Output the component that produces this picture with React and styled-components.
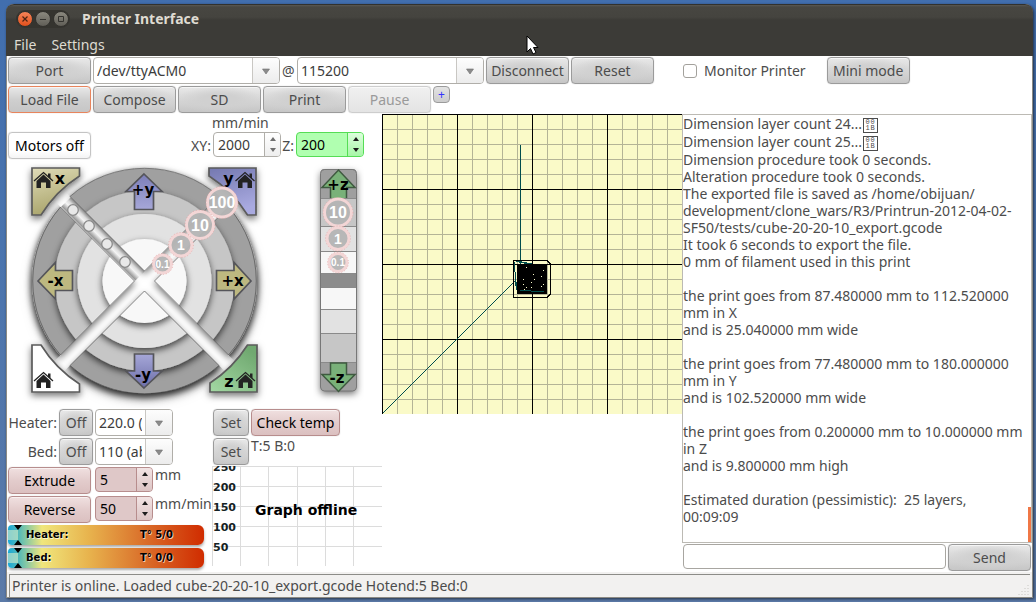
import React from 'react';

import styled, { createGlobalStyle } from 'styled-components';

const GlobalStyle = createGlobalStyle`
    * {
        box-sizing: border-box;
    }
    body {
        margin: 0;
        font-family: "Noto Sans", "Open Sans", sans-serif;
        font-size: 14px;
        color: #4c4c4c;
    }
    button, input, select {
        font: inherit;
        color: inherit;
        margin: 0;
    }
`

const Desktop = styled.div`
    display: flex;
    flex-direction: column;
    min-height: 100vh;
    padding: 4px 3px 4px 6px;
    background: linear-gradient(#416eae, #4a74ae 40%, #5b7aa8);
`

const AppWindow = styled.div`
    display: flex;
    flex-direction: column;
    flex: 1;
    border: 1px solid #8d8b84;
    border-top: none;
    border-radius: 8px 8px 0 0;
    background: #ffffff;
    box-shadow: 1px 1px 3px rgba(0, 0, 0, 0.6);
`

const Header = styled.header`
    position: relative;
    height: 52px;
    margin: 0 -1px;
    padding-left: 1px;
    border-top: 1px solid #32312d;
    border-radius: 8px 8px 0 0;
    background: linear-gradient(#5a5852 0px, #474641 2px, #45443f 12px, #3c3b37 15px, #3c3b37);
    color: #dfdbd2;
`

const TitleBar = styled.div`
    display: flex;
    align-items: center;
    height: 28px;
    padding-left: 9px;
    gap: 12px;
`

const Title = styled.h1`
    margin: 0;
    font-size: 14px;
    line-height: 20px;
`

const WindowButtons = styled.div`
    display: flex;
    gap: 2px;
    padding: 1px;
    border-radius: 9px;
    background: #35342f;
`

const WindowButton = styled.button`
    display: flex;
    width: 16px;
    height: 16px;
    padding: 0;
    border: 1px solid #33322e;
    border-radius: 8px;
    background: ${props => props.$close ? 'linear-gradient(#f58458, #e2501c)' : 'linear-gradient(#8b897f, #605e57)'};
`

const Menu = styled.nav`
    display: flex;
    gap: 15px;
    padding-left: 7px;
    line-height: 24px;
`

const MenuLink = styled.a`
    color: #dfdbd2;
    text-decoration: none;
`

const Cursor = styled.svg`
    position: absolute;
    left: 50%;
    top: 30px;
    margin-left: 6px;
`

const Toolbar = styled.div`
    display: flex;
    align-items: flex-start;
    gap: 2px;
    height: 29px;
    padding: 1px;
`

const buttonTones = {
    grey: { back: 'radial-gradient(ellipse at center, #d0d0d0 30%, rgba(208, 208, 208, 0) 75%), linear-gradient(#e8e8e8, #c6c6c6)', line: '#9b9b9b', text: '#4c4c4c' },
    focus: { back: 'linear-gradient(#e8e8e8, #cfcfcf 50%, #c6c6c6)', line: '#e8845c', text: '#4c4c4c' },
    disabled: { back: 'linear-gradient(#f0f0f0, #e4e4e4)', line: '#cdcdcd', text: '#9a9a9a' },
    white: { back: 'linear-gradient(#ffffff, #ffffff 70%, #f4f4f4)', line: '#c4c4c4', text: '#000000' },
    pink: { back: 'linear-gradient(#f0e0e0, #e3cccc 50%, #dbc0c0)', line: '#b78d8d', text: '#000000' }
}

const Button = styled.button`
    flex: none;
    width: ${props => props.$width || 83}px;
    height: 27px;
    padding: 0;
    border: 1px solid ${props => buttonTones[props.$tone || 'grey'].line};
    border-radius: 4px;
    background: ${props => buttonTones[props.$tone || 'grey'].back};
    color: ${props => buttonTones[props.$tone || 'grey'].text};
    box-shadow: inset 0 1px 0 rgba(255, 255, 255, 0.6), 0 0 1px rgba(0, 0, 0, 0.3);
    text-align: center;
    white-space: nowrap;
`

const PlusButton = styled.button`
    width: 17px;
    height: 17px;
    padding: 0;
    border: 1px solid #9b9b9b;
    border-radius: 4px;
    background: linear-gradient(#e4e4e4, #cccccc);
    color: #3333ff;
    font-size: 12px;
    line-height: 14px;
`

const At = styled.span`
    width: 13px;
    line-height: 27px;
`

const ComboBox = styled.span`
    display: flex;
    flex: none;
    position: relative;
    width: ${props => props.$width}px;
    height: 27px;
    border: 1px solid #b0aea9;
    border-radius: 4px;
    background: #ffffff;
    overflow: hidden;
`

const ComboSelect = styled.select`
    flex: 1;
    min-width: 0;
    height: 25px;
    padding: 0 30px 0 3px;
    border: none;
    appearance: none;
    background: linear-gradient(#fdfdfd, #ececec) right / 26px 100% no-repeat;
    color: #3c3c3c;
`

const ComboArrow = styled.svg`
    position: absolute;
    right: 0;
    top: 0;
    border-left: 1px solid #c9c7c3;
    pointer-events: none;
`

const MonitorLabel = styled.label`
    display: flex;
    align-items: center;
    gap: 7px;
    height: 27px;
    margin: 0 19px 0 27px;
`

const CheckBox = styled.input`
    appearance: none;
    width: 14px;
    height: 14px;
    border: 1px solid #a3a19c;
    border-radius: 3px;
    background: #ffffff;
`

const Main = styled.main`
    display: grid;
    grid-template-columns: 375px 300px minmax(0, 1fr);
    flex: 1;
`

const Controls = styled.section`
    display: flex;
    flex-direction: column;
`

const FeedUnit = styled.div`
    height: 17px;
    padding-left: 205px;
    line-height: 17px;
`

const SpeedRow = styled.div`
    display: flex;
    height: 29px;
    padding: 1px;
`

const SpeedLabel = styled.label`
    width: ${props => props.$width}px;
    padding-right: 2px;
    line-height: 27px;
    text-align: right;
    white-space: nowrap;
`

const spinTones = {
    white: { field: '#ffffff', knob: 'linear-gradient(#ffffff, #eeeeee)', line: '#b0aea9', text: '#3c3c3c' },
    green: { field: '#b0ffb0', knob: 'linear-gradient(#dcffdc, #a8f6a8)', line: '#55dd55', text: '#000000' },
    pink: { field: '#dfc8c8', knob: 'linear-gradient(#f2e4e4, #dcc4c4)', line: '#b78d8d', text: '#000000' }
}

const SpinBox = styled.span`
    display: flex;
    flex: none;
    width: ${props => props.$width}px;
    height: 25px;
    border: 1px solid ${props => spinTones[props.$tone].line};
    border-radius: 4px;
    background: ${props => spinTones[props.$tone].field};
    overflow: hidden;
`

const SpinInput = styled.input`
    flex: 1;
    min-width: 0;
    padding: 0 0 0 4px;
    border: none;
    background: none;
    color: ${props => spinTones[props.$tone].text};
`

const SpinKnobs = styled.span`
    display: flex;
    flex-direction: column;
    width: 16px;
    border-left: 1px solid ${props => spinTones[props.$tone].line};
    background: ${props => spinTones[props.$tone].knob};
`

const SpinKnob = styled.button`
    display: flex;
    flex: 1;
    align-items: center;
    justify-content: center;
    padding: 0;
    border: none;
    background: none;
`

const JogPad = styled.svg`
    display: block;
    width: 375px;
    height: 248px;
    text {
        font-family: "DejaVu Sans", sans-serif;
        font-weight: bold;
        text-anchor: middle;
    }
    text.step {
        font-family: "Liberation Sans", sans-serif;
        fill: #ffffff;
    }
`

const HeatArea = styled.div`
    display: grid;
    grid-template-columns: 205px 170px;
`

const HeatRow = styled.div`
    display: flex;
    gap: 2px;
    height: 29px;
    padding: 1px;
`

const HeatLabel = styled.label`
    display: flex;
    justify-content: flex-end;
    width: 49px;
    line-height: 27px;
    white-space: nowrap;
`

const FeedRow = styled(HeatRow)`
    gap: 4px;
`

const Unit = styled.span`
    line-height: 15px;
    margin-left: -2px;
    white-space: nowrap;
`

const Readout = styled.span`
    line-height: 15px;
`

const Gauge = styled.div`
    display: flex;
    align-items: center;
    width: 196px;
    height: 20px;
    margin: 1px 0 3px 1px;
    border-radius: 4px 6px 6px 4px;
    background: linear-gradient(90deg, #18a8d8, #5cbcb4 12px, #f0e67c 34px, #e8b44e 80px, #d96a28 140px, #d02c00);
    box-shadow: 0 2px 3px rgba(0, 0, 0, 0.35);
    color: #000000;
    font-family: "DejaVu Sans", sans-serif;
    font-size: 10px;
    font-weight: bold;
    line-height: 18px;
    text-shadow: 1px 1px 0 rgba(255, 255, 255, 0.7);
`

const GaugeName = styled.span`
    width: 117px;
    padding-left: 3px;
`

const Graph = styled.svg`
    display: block;
    width: 170px;
    height: 100px;
    text {
        font-family: "DejaVu Sans", sans-serif;
        font-weight: bold;
        font-size: 11px;
        fill: #152224;
    }
    text.notice {
        font-size: 14px;
        fill: #000000;
    }
`

const Plate = styled.svg`
    display: block;
    width: 300px;
    height: 300px;
`

const Console = styled.section`
    display: flex;
    flex-direction: column;
`

const Log = styled.div`
    position: relative;
    flex: 1;
    border: 1px solid #bcbab4;
    line-height: 17px;
    white-space: pre;
    overflow: hidden;
`

const LogLine = styled.div`
    min-height: 17px;
    height: ${props => props.$tall ? 18 : 17}px;
`

const EscapeBox = styled.span`
    display: inline-grid;
    grid-template-columns: 5px 5px;
    grid-auto-rows: 6px;
    align-items: center;
    justify-content: center;
    align-content: center;
    width: 15px;
    height: 15px;
    margin-left: 1px;
    border: 1px solid #4c4c4c;
    font-family: "Liberation Mono", monospace;
    font-size: 7px;
    line-height: 6px;
    vertical-align: middle;
`

const ScrollThumb = styled.div`
    position: absolute;
    right: 0;
    bottom: 0;
    width: 3px;
    height: 35px;
    background: #f07746;
`

const SendRow = styled.form`
    display: flex;
    gap: 2px;
    height: 29px;
    padding: 1px;
`

const CommandInput = styled.input`
    flex: 1;
    min-width: 0;
    height: 25px;
    padding: 0 4px;
    border: 1px solid #a8a6a1;
    border-radius: 4px;
`

const StatusBar = styled.footer`
    display: flex;
    height: 25px;
    padding: 2px 0 0 2px;
    background: #f2f1f0;
`

const StatusText = styled.div`
    flex: 1;
    position: relative;
    border-top: 1px solid #8c8c88;
    border-left: 1px solid #8c8c88;
    margin-right: 2px;
    padding-left: 2px;
    line-height: 22px;
`

const Grip = styled.svg`
    position: absolute;
    right: 0;
    bottom: 0;
`

const logLines = [
    'Dimension procedure took 0 seconds.',
    'Alteration procedure took 0 seconds.',
    'The exported file is saved as /home/obijuan/',
    'development/clone_wars/R3/Printrun-2012-04-02-',
    'SF50/tests/cube-20-20-10_export.gcode',
    'It took 6 seconds to export the file.',
    '0 mm of filament used in this print',
    '',
    'the print goes from 87.480000 mm to 112.520000',
    'mm in X',
    'and is 25.040000 mm wide',
    '',
    'the print goes from 77.480000 mm to 180.000000',
    'mm in Y',
    'and is 102.520000 mm wide',
    '',
    'the print goes from 0.200000 mm to 10.000000 mm',
    'in Z',
    'and is 9.800000 mm high',
    '',
    'Estimated duration (pessimistic):  25 layers,',
    '00:09:09'
]

function Combo({ id, width, value, label }) {
    return (
        <ComboBox $width={width}>
            <ComboSelect id={id} aria-label={label} defaultValue={value}>
                <option value={value}>{value}</option>
            </ComboSelect>
            <ComboArrow width="27" height="25">
                <path d="M9.500 11h7l-3.500 5z" fill="#8b8b8b" stroke="#6f6f6f" strokeWidth="0.600" />
            </ComboArrow>
        </ComboBox>
    )
}

function Spin({ id, width, value, tone, label }) {
    const arrow = tone === 'white' ? '#6e6e6e' : '#1c1c1c';
    return (
        <SpinBox $width={width} $tone={tone}>
            <SpinInput id={id} type="text" aria-label={label} defaultValue={value} $tone={tone} />
            <SpinKnobs $tone={tone}>
                <SpinKnob aria-label="Increase" type="button">
                    <svg width="6" height="4"><path d="M0 4l3-4 3 4z" fill={arrow} /></svg>
                </SpinKnob>
                <SpinKnob aria-label="Decrease" type="button">
                    <svg width="6" height="4"><path d="M0 0l3 4 3-4z" fill={arrow} /></svg>
                </SpinKnob>
            </SpinKnobs>
        </SpinBox>
    )
}

function House({ x, y }) {
    return (
        <g transform={`translate(${x} ${y})`}>
            <path d="M-9.500 0.500L0 -8L9.500 0.500" fill="none" stroke="#222" strokeWidth="1.300" />
            <path d="M4.500 -7h2.500v5l-2.500 -2z" fill="#222" />
            <path d="M0 -6L7 0.500V7.500H2.500V2H-2.500V7.500H-7V0.500z" fill="#222" />
        </g>
    )
}

function Step({ x, y, r, size, children }) {
    return (
        <g>
            <circle cx={x} cy={y} r={r - 1.5} fill="#b4b4b4" fillOpacity="0.95" stroke="#f3d6d6" strokeWidth="3" />
            <circle cx={x} cy={y} r={r} fill="none" stroke="#e09c9c" strokeWidth="0.600" strokeDasharray="1 2" />
            <text className="step" x={x} y={y + size * 0.36} fontSize={size}>{children}</text>
        </g>
    )
}

// rings are drawn biggest first so every smaller one throws its shadow outwards
const rings = [[112.5, '#a0a0a0'], [90, '#c6c6c6'], [67, '#e2e2e2'], [42, '#f8f8f8']];
const quadrants = [
    'M144.500 271L31 157.500H258z',
    'M134.500 281L21 167.500V394.500z',
    'M154.500 281L268 167.500V394.500z',
    'M144.500 291L31 404.500H258z'
];
const quadrantEdges = [
    'M144.500 271L70 196.500A112.500 112.500 0 0 1 219 196.500z',
    'M134.500 281L60.500 207A112.500 112.500 0 0 0 60.500 355z',
    'M154.500 281L228.500 207A112.500 112.500 0 0 1 228.500 355z',
    'M144.500 291L70 365.500A112.500 112.500 0 0 0 219 365.500z'
];
const beads = [[73, 210], [89, 226], [107, 244], [125, 262]];
const zSegments = [
    [169, 29, '#9f9f9f'], [198, 28, '#c6c6c6'], [226, 25, '#e2e2e2'], [251, 22, '#f7f7f7'], [273, 14, '#8c8c8c'],
    [287, 22, '#f7f7f7'], [309, 24, '#e2e2e2'], [333, 29, '#c6c6c6'], [362, 29, '#9f9f9f']
];

function Jog() {
    return (
        <JogPad viewBox="7 160 375 248">
            <defs>
                <clipPath id="quads">{quadrants.map(d => <path key={d} d={d} />)}</clipPath>
                <clipPath id="zbar"><rect x="320.500" y="169" width="36" height="222" rx="4" /></clipPath>
                <filter id="drop" x="-20%" y="-20%" width="140%" height="150%">
                    <feDropShadow dx="0" dy="3" stdDeviation="3.500" floodOpacity="0.7" />
                </filter>
                <filter id="soft" x="-20%" y="-20%" width="140%" height="150%">
                    <feDropShadow dx="0" dy="3" stdDeviation="3.500" floodOpacity="0.55" />
                </filter>
                <linearGradient id="tube" gradientUnits="userSpaceOnUse" x1="98" y1="243" x2="107" y2="234">
                    <stop offset="0" stopColor="#8e8e8e" />
                    <stop offset="0.450" stopColor="#f4f4f4" />
                    <stop offset="0.700" stopColor="#dcdcdc" />
                    <stop offset="1" stopColor="#8a8a8a" />
                </linearGradient>
                <linearGradient id="khaki" x1="0" y1="0" x2="0.3" y2="1">
                    <stop offset="0" stopColor="#e0dcb8" /><stop offset="1" stopColor="#aaa56c" />
                </linearGradient>
                <linearGradient id="violet" x1="0" y1="0" x2="0.3" y2="1">
                    <stop offset="0" stopColor="#7478b0" /><stop offset="1" stopColor="#a9aae0" />
                </linearGradient>
                <linearGradient id="green" x1="0" y1="1" x2="0.7" y2="0">
                    <stop offset="0" stopColor="#a4d8a4" /><stop offset="1" stopColor="#6fa86f" />
                </linearGradient>
                <linearGradient id="arrowUp" x1="0" y1="0" x2="0" y2="1">
                    <stop offset="0" stopColor="#7c7eb8" /><stop offset="1" stopColor="#a6a7d8" />
                </linearGradient>
                <linearGradient id="arrowDown" x1="0" y1="0" x2="0" y2="1">
                    <stop offset="0" stopColor="#a6a7d8" /><stop offset="1" stopColor="#6c6ea8" />
                </linearGradient>
            </defs>
            <g filter="url(#soft)">
                <g clipPath="url(#quads)">
                    {rings.map(([r, fill]) => <circle key={r} cx="144.500" cy="281" r={r} fill={fill} filter="url(#drop)" />)}
                </g>
            </g>
            <path d="M66 202L140 276" stroke="url(#tube)" strokeWidth="13" />
            {quadrantEdges.map(d => <path key={d} d={d} fill="none" stroke="#4a4a4a" strokeWidth="0.800" strokeOpacity="0.8" />)}
            {beads.map(([x, y]) => <circle key={x} cx={x} cy={y} r="5.300" fill="#e8e8e8" stroke="#8a8a8a" strokeWidth="1.300" />)}
            <g stroke="#5b5b5b" strokeWidth="1.700" filter="url(#soft)">
                <path d="M32 168H79.500V176A123.500 123.500 0 0 0 41 215H32z" fill="url(#khaki)" />
                <path d="M256 168H209V176A123.500 123.500 0 0 1 247.500 215H256z" fill="url(#violet)" />
                <path d="M32 345H41A123.500 123.500 0 0 0 79.500 384V392H32z" fill="#ffffff" />
                <path d="M257 345H247.500A123.500 123.500 0 0 1 210 383V392H257z" fill="url(#green)" />
            </g>
            <House x={43.5} y={180.5} />
            <House x={245} y={180.5} />
            <House x={43.5} y={380.5} />
            <House x={245.5} y={380.5} />
            <text x="60" y="183.500" fontSize="16">x</text>
            <text x="228.500" y="184" fontSize="16">y</text>
            <text x="229" y="387" fontSize="16">z</text>
            <g stroke="#55555a" strokeWidth="1.700">
                <path d="M144 174L162 191.500H153.500V209.500H134.500V191.500H126z" fill="url(#arrowUp)" />
                <path d="M144 388L162 371H153.500V354H134.500V371H126z" fill="url(#arrowDown)" />
                <path d="M38 281L55.500 262.500V270.500H72.500V290.500H55.500V299z" fill="#bdb880" />
                <path d="M251 281L234 262.500V270.500H216.500V290.500H234V299z" fill="#bdb880" />
            </g>
            <text x="143" y="194.500" fontSize="15">+y</text>
            <text x="143" y="380" fontSize="15">-y</text>
            <text x="55.500" y="286" fontSize="15">-x</text>
            <text x="232.500" y="286" fontSize="15">+x</text>
            <Step x={222} y={202.5} r={16} size={16}>100</Step>
            <Step x={200} y={225} r={15} size={16}>10</Step>
            <Step x={181} y={245} r={12.5} size={14}>1</Step>
            <Step x={162.5} y={264} r={10.5} size={10}>0.1</Step>
            <g filter="url(#soft)">
                <g clipPath="url(#zbar)">
                    {zSegments.map(([y, h, fill]) => (
                        <rect key={y} x="320.500" y={y + 0.5} width="36" height={h} fill={fill} stroke="#8a8a8a" />
                    ))}
                </g>
            </g>
            <rect x="320.500" y="169.500" width="36" height="221.500" rx="4" fill="none" stroke="#777" />
            <g stroke="#3f5a40" strokeWidth="1.500">
                <path d="M330.500 198V187.500H322L338.500 170L355 187.500H346.500V198" fill="#79b179" />
                <path d="M330.500 363V374.500H322L338.500 391.500L355 374.500H346.500V363z" fill="#79b179" />
            </g>
            <text x="338" y="189.500" fontSize="15">+z</text>
            <text x="337" y="383" fontSize="15">-z</text>
            <Step x={338} y={212.5} r={15} size={16}>10</Step>
            <Step x={338} y={238.5} r={12.5} size={14}>1</Step>
            <Step x={338} y={262.5} r={10.5} size={10}>0.1</Step>
        </JogPad>
    )
}

function TempGraph() {
    return (
        <Graph viewBox="0 0 170 100">
            <path d="M0.500 0V100M28.500 0V100M56.500 0V100M85.500 0V100M113.500 0V100M141.500 0V100" stroke="#dcdcdc" />
            <path d="M0 0.500H170M0 20.500H170M0 40.500H170M0 60.500H170M0 80.500H170" stroke="#dcdcdc" />
            <g>
                <text x="1" y="5">250</text>
                <text x="1" y="25">200</text>
                <text x="1" y="45">150</text>
                <text x="1" y="65">100</text>
                <text x="1" y="85">50</text>
            </g>
            <text className="notice" x="43" y="49">Graph offline</text>
        </Graph>
    )
}

function BuildPlate() {
    const ticks = Array.from({ length: 20 }, (_, i) => i * 15);
    const dots = [[144, 153], [161, 156], [151, 160], [159, 162], [141, 165], [152, 165], [149, 168], [141, 170], [161, 170], [159, 172], [144, 173], [149, 173], [142, 175]];
    return (
        <Plate viewBox="0 0 300 300" shapeRendering="crispEdges">
            <rect width="300" height="300" fill="#fafac8" />
            {ticks.map(t => <path key={t} d={`M${t + 0.5} 0V300M0 ${t + 0.5}H300`} stroke="#b4b496" />)}
            {ticks.filter(t => t % 75 === 0).map(t => <path key={t} d={`M${t + 0.5} 0V300M0 ${t + 0.5}H300`} stroke="#000000" />)}
            <path d="M138.500 31V153" stroke="#004d4d" />
            <path d="M0.500 299.500L133.500 166.500" stroke="#004d4d" />
            <path d="M131.500 146.500H165L168.500 150V180L165 183.500H131.500z" fill="none" stroke="#000000" />
            <rect x="135" y="150" width="30" height="30" fill="#000000" />
            <path d="M132.500 148V158M133.500 158V172M134.500 168V176M134 147.500H140M137 148.500H145M142 149.500H150M138 176.500H149M149 177.500H162" stroke="#004d4d" />
            {dots.map(([x, y]) => <rect key={`${x}-${y}`} x={x} y={y} width="1" height="1" fill="#fafac8" />)}
        </Plate>
    )
}

function GaugeBar({ name, reading }) {
    return (
        <Gauge>
            <svg width="15" height="20">
                <path d="M0 5h10v10h-10z" fill="#d8ecc8" fillOpacity="0.6" />
                <path d="M6 0h8l-4 5zM6 20h8l-4 -5z" fill="#000000" />
            </svg>
            <GaugeName>{name}</GaugeName>
            <span>{reading}</span>
        </Gauge>
    )
}

function App() {
    return (
        <Desktop>
            <GlobalStyle />
            <AppWindow>
                <Header>
                    <TitleBar>
                        <WindowButtons>
                            <WindowButton $close aria-label="Close">
                                <svg width="14" height="14"><path d="M4.500 4.500l5 5M9.500 4.500l-5 5" stroke="#4b2414" strokeWidth="1.200" /></svg>
                            </WindowButton>
                            <WindowButton aria-label="Minimise">
                                <svg width="14" height="14"><path d="M4 7.500h6" stroke="#33322e" /></svg>
                            </WindowButton>
                            <WindowButton aria-label="Maximise">
                                <svg width="14" height="14"><path d="M4.500 4.500h5v5h-5z" fill="none" stroke="#33322e" /></svg>
                            </WindowButton>
                        </WindowButtons>
                        <Title>Printer Interface</Title>
                    </TitleBar>
                    <Menu>
                        <MenuLink href="#file">File</MenuLink>
                        <MenuLink href="#settings">Settings</MenuLink>
                    </Menu>
                    <Cursor width="14" height="20">
                        <path d="M1 1V17L4.500 13.500L7 19L10 17.500L7.500 12.500H12z" fill="#ffffff" stroke="#000000" />
                    </Cursor>
                </Header>
                <Toolbar>
                    <Button>Port</Button>
                    <Combo width={187} value="/dev/ttyACM0" label="Port" />
                    <At>@</At>
                    <Combo width={187} value="115200" label="Baud rate" />
                    <Button>Disconnect</Button>
                    <Button>Reset</Button>
                    <MonitorLabel>
                        <CheckBox type="checkbox" />
                        Monitor Printer
                    </MonitorLabel>
                    <Button>Mini mode</Button>
                </Toolbar>
                <Toolbar>
                    <Button $tone="focus">Load File</Button>
                    <Button>Compose</Button>
                    <Button>SD</Button>
                    <Button>Print</Button>
                    <Button $tone="disabled" disabled>Pause</Button>
                    <PlusButton>+</PlusButton>
                </Toolbar>
                <Main>
                    <Controls>
                        <FeedUnit>mm/min</FeedUnit>
                        <SpeedRow>
                            <Button $tone="white">Motors off</Button>
                            <SpeedLabel htmlFor="xy" $width={122}>XY:</SpeedLabel>
                            <Spin id="xy" width={68} value="2000" tone="white" />
                            <SpeedLabel htmlFor="z" $width={15}>Z:</SpeedLabel>
                            <Spin id="z" width={68} value="200" tone="green" />
                        </SpeedRow>
                        <Jog />
                        <HeatArea>
                            <div>
                                <HeatRow>
                                    <HeatLabel htmlFor="heater">Heater:</HeatLabel>
                                    <Button $width={34}>Off</Button>
                                    <Combo id="heater" width={78} value="220.0 (pla)" />
                                </HeatRow>
                                <HeatRow>
                                    <HeatLabel htmlFor="bed">Bed:</HeatLabel>
                                    <Button $width={34}>Off</Button>
                                    <Combo id="bed" width={78} value="110 (abs)" />
                                </HeatRow>
                                <FeedRow>
                                    <Button $tone="pink">Extrude</Button>
                                    <Spin width={58} value="5" tone="pink" label="Length" />
                                    <Unit>mm</Unit>
                                </FeedRow>
                                <FeedRow>
                                    <Button $tone="pink">Reverse</Button>
                                    <Spin width={58} value="50" tone="pink" label="Feed rate" />
                                    <Unit>mm/min</Unit>
                                </FeedRow>
                                <GaugeBar name="Heater:" reading="T° 5/0" />
                                <GaugeBar name="Bed:" reading="T° 0/0" />
                            </div>
                            <div>
                                <HeatRow>
                                    <Button $width={36}>Set</Button>
                                    <Button $width={89} $tone="pink">Check temp</Button>
                                </HeatRow>
                                <HeatRow>
                                    <Button $width={36}>Set</Button>
                                    <Readout>T:5 B:0</Readout>
                                </HeatRow>
                                <TempGraph />
                            </div>
                        </HeatArea>
                    </Controls>
                    <BuildPlate />
                    <Console>
                        <Log role="log">
                            {['24', '25'].map(layer => (
                                <LogLine $tall key={layer}>
                                    Dimension layer count {layer}...<EscapeBox><span>0</span><span>0</span><span>1</span><span>B</span></EscapeBox>
                                </LogLine>
                            ))}
                            {logLines.map((line, i) => <LogLine key={i}>{line}</LogLine>)}
                            <ScrollThumb />
                        </Log>
                        <SendRow onSubmit={ev => ev.preventDefault()}>
                            <CommandInput type="text" aria-label="Command" />
                            <Button>Send</Button>
                        </SendRow>
                    </Console>
                </Main>
                <StatusBar>
                    <StatusText>
                        Printer is online. Loaded cube-20-20-10_export.gcode Hotend:5 Bed:0
                        <Grip width="14" height="14">
                            <path d="M12 2v12M9 5v9M6 8v6M3 11v3" stroke="#c8c6c2" strokeDasharray="1 2" />
                        </Grip>
                    </StatusText>
                </StatusBar>
            </AppWindow>
        </Desktop>
    )
};

export default App;
